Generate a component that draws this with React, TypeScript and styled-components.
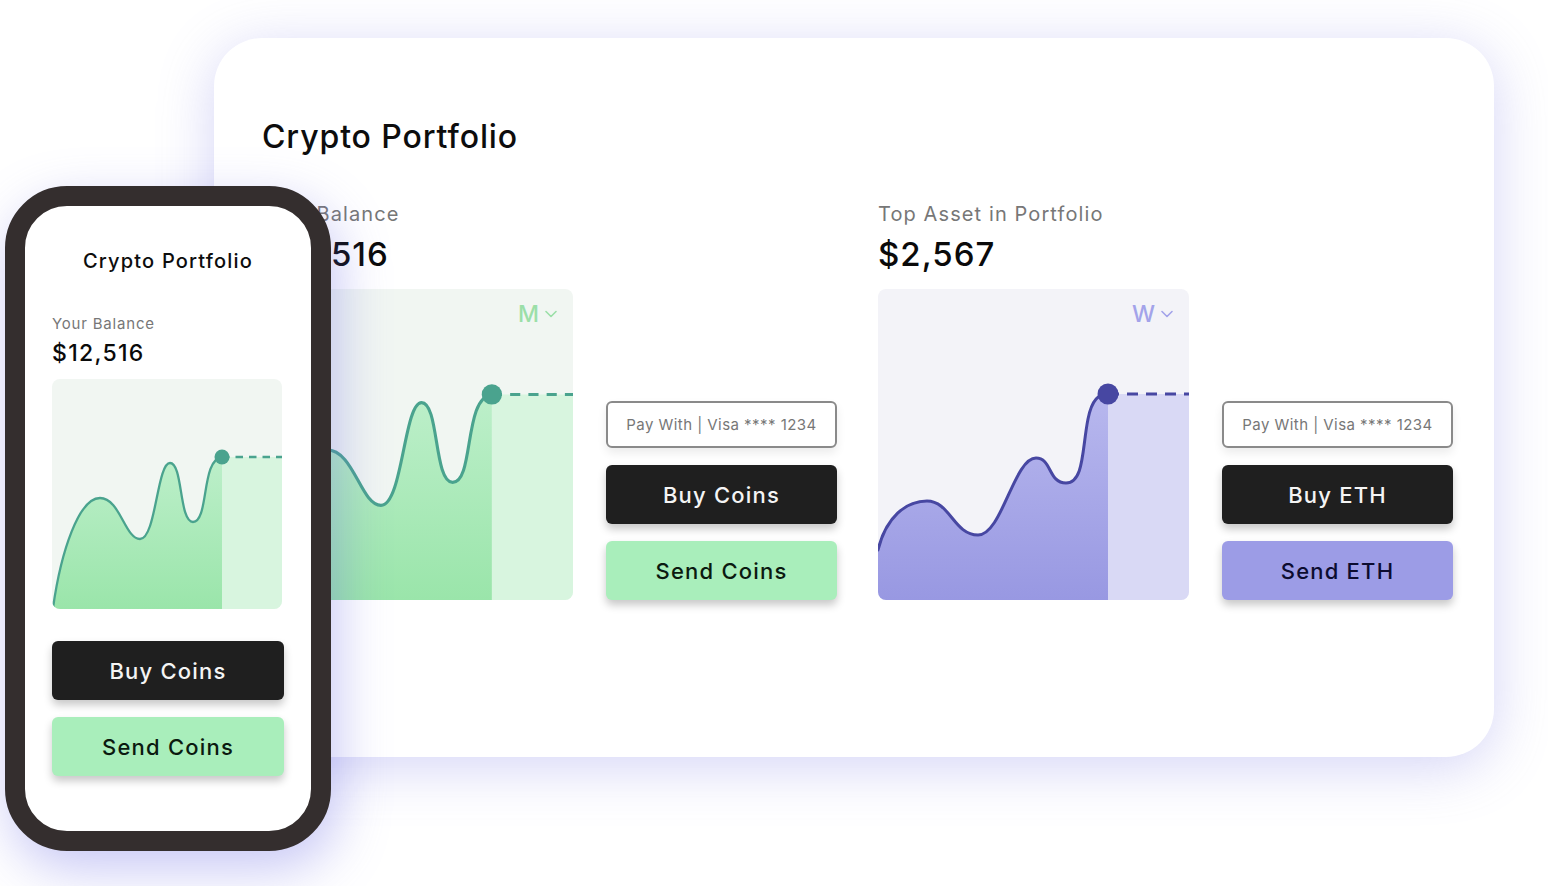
import React from "react";
import styled, { createGlobalStyle } from "styled-components";

const GlobalStyle = createGlobalStyle`
  html, body { margin: 0; padding: 0; background: #ffffff; }
  body { font-family: Inter, "Noto Sans", "Liberation Sans", sans-serif; color: #111; }
  * { box-sizing: border-box; }
`;

const Stage = styled.div`
  position: relative;
  width: 1548px;
  height: 886px;
  overflow: hidden;
  padding: 38px 0 0 214px;
`;

const Card = styled.div`
  width: 1280px;
  height: 719px;
  border-radius: 48px;
  background: #ffffff;
  box-shadow: 0 10px 56px rgba(112, 112, 226, 0.3);
  padding: 79px 41px 0 48px;
`;

const Title = styled.h1`
  margin: 0;
  font-size: 32px;
  line-height: 40px;
  font-weight: 500;
  letter-spacing: 0.9px;
  color: #0d0d0d;
`;

const SectionRow = styled.div`
  display: flex;
  gap: 41px;
  margin-top: 45px;
`;

const Section = styled.div`
  display: flex;
  align-items: flex-end;
  gap: 33px;
`;

const Info = styled.div<{ $w: number }>`
  display: flex;
  flex-direction: column;
  width: ${(p) => p.$w}px;
`;

const Label = styled.div<{ $small?: boolean }>`
  font-size: ${(p) => (p.$small ? 15 : 20)}px;
  line-height: ${(p) => (p.$small ? 18 : 24)}px;
  color: #777777;
  letter-spacing: ${(p) => (p.$small ? 0.8 : 1.1)}px;
  white-space: nowrap;
`;

const Value = styled.div<{ $small?: boolean }>`
  margin-top: ${(p) => (p.$small ? 6 : 8)}px;
  font-size: ${(p) => (p.$small ? 23 : 33)}px;
  line-height: ${(p) => (p.$small ? 28 : 40)}px;
  font-weight: 500;
  letter-spacing: ${(p) => (p.$small ? 1.3 : 1)}px;
  color: #0a0a0a;
  white-space: nowrap;
`;

const ChartBox = styled.div<{ $size: number; $bg: string; $gap: number }>`
  position: relative;
  margin-top: ${(p) => p.$gap}px;
  width: ${(p) => p.$size}px;
  height: ${(p) => p.$size}px;
  border-radius: 8px;
  overflow: hidden;
  background: ${(p) => p.$bg};
  svg.chart { display: block; width: 100%; height: 100%; }
`;

const Range = styled.div<{ $color: string }>`
  position: absolute;
  top: 12px;
  right: 16px;
  display: flex;
  align-items: center;
  gap: 6px;
  font-size: 23px;
  line-height: 26px;
  font-weight: 500;
  color: ${(p) => p.$color};
`;

const Actions = styled.div<{ $w: number; $top?: number }>`
  display: flex;
  flex-direction: column;
  gap: 17px;
  width: ${(p) => p.$w}px;
  margin-top: ${(p) => p.$top ?? 0}px;
`;

const PayWith = styled.div`
  height: 47px;
  border: 2px solid #8a8a8a;
  border-radius: 6px;
  background: #fff;
  display: flex;
  align-items: center;
  justify-content: center;
  font-size: 15px;
  color: #777;
  letter-spacing: 0.45px;
  box-shadow: 0 5px 10px rgba(0, 0, 0, 0.08);
  white-space: nowrap;
`;

const Button = styled.button<{ $bg: string; $fg: string }>`
  height: 59px;
  border: none;
  border-radius: 6px;
  background: ${(p) => p.$bg};
  color: ${(p) => p.$fg};
  font-family: inherit;
  font-size: 22px;
  font-weight: 500;
  letter-spacing: 1.2px;
  box-shadow: 0 5px 9px rgba(0, 0, 0, 0.22);
  cursor: pointer;
`;

const Phone = styled.div`
  position: absolute;
  left: 5px;
  top: 186px;
  width: 326px;
  height: 665px;
  border: 20px solid #342e2e;
  border-radius: 62px;
  background: #ffffff;
  box-shadow: 6px 18px 52px rgba(108, 108, 228, 0.38);
  padding: 43px 27px 0 27px;
  display: flex;
  flex-direction: column;
`;

const PhoneTitle = styled.div`
  font-size: 20px;
  line-height: 24px;
  font-weight: 500;
  letter-spacing: 1.2px;
  text-align: center;
  color: #0d0d0d;
  margin-bottom: 42px;
`;

type ChartSpec = {
  vb: number;
  path: string;
  px: number;
  py: number;
  line: string;
  top: string;
  bottom: string;
  rest: string;
  sw: number;
  r: number;
  dash: string;
};

const greenSpec: ChartSpec = {
  vb: 230,
  path:
    "M1,229 C9,172 27,119 48,119 C68,119 73,160 88,160 C104,160 105,84 118,84 C131,84 127,143 141,143 C157,143 149,80 170,78",
  px: 170,
  py: 78,
  line: "#4aa38e",
  top: "#bdefca",
  bottom: "#9ae5aa",
  rest: "#d8f5df",
  sw: 2.3,
  r: 7.5,
  dash: "7.5 6",
};

const purpleSpec: ChartSpec = {
  vb: 311,
  path:
    "M0,261 C8,228 28,212 49,212 C72,212 76,246 100,246 C124,246 136,169 158,169 C174,169 170,194 188,194 C206,194 204,160 210,130 C214,110 221,105 230,105",
  px: 230,
  py: 105,
  line: "#4747a2",
  top: "#b8b8ee",
  bottom: "#9898e2",
  rest: "#d9d9f5",
  sw: 3,
  r: 10.5,
  dash: "11 8",
};

function Chart({ spec, uid }: { spec: ChartSpec; uid: string }) {
  const gid = `fill-${uid}`;
  const { vb } = spec;
  return (
    <svg className="chart" viewBox={`0 0 ${vb} ${vb}`} preserveAspectRatio="none">
      <defs>
        <linearGradient id={gid} x1="0" y1="0" x2="0" y2="1">
          <stop offset="0" stopColor={spec.top} />
          <stop offset="1" stopColor={spec.bottom} />
        </linearGradient>
      </defs>
      <rect x={spec.px} y={spec.py} width={vb - spec.px} height={vb - spec.py} fill={spec.rest} />
      <path d={`${spec.path} L${spec.px},${vb} L0,${vb} Z`} fill={`url(#${gid})`} />
      <path d={spec.path} fill="none" stroke={spec.line} strokeWidth={spec.sw} strokeLinecap="round" />
      <line
        x1={spec.px}
        y1={spec.py}
        x2={vb}
        y2={spec.py}
        stroke={spec.line}
        strokeWidth={spec.sw}
        strokeDasharray={spec.dash}
      />
      <circle cx={spec.px} cy={spec.py} r={spec.r} fill={spec.line} />
    </svg>
  );
}

const Chevron = ({ color }: { color: string }) => (
  <svg width="12" height="8" viewBox="0 0 12 8">
    <polyline points="1,1.5 6,6.5 11,1.5" fill="none" stroke={color} strokeWidth="1.6" strokeLinecap="round" strokeLinejoin="round" />
  </svg>
);

export default function App() {
  return (
    <>
      <GlobalStyle />
      <Stage>
        <Card>
          <Title>Crypto Portfolio</Title>
          <SectionRow>
            <Section>
              <Info $w={311}>
                <Label>Your Balance</Label>
                <Value>$12,516</Value>
                <ChartBox $size={311} $bg="#f1f6f2" $gap={15}>
                  <Chart spec={greenSpec} uid="main-g" />
                  <Range $color="#9bdfa8">
                    M <Chevron color="#9bdfa8" />
                  </Range>
                </ChartBox>
              </Info>
              <Actions $w={231}>
                <PayWith>Pay With | Visa **** 1234</PayWith>
                <Button $bg="#1f1f1f" $fg="#f4f4f4">Buy Coins</Button>
                <Button $bg="#a9eebb" $fg="#0b1a10">Send Coins</Button>
              </Actions>
            </Section>
            <Section>
              <Info $w={311}>
                <Label>Top Asset in Portfolio</Label>
                <Value>$2,567</Value>
                <ChartBox $size={311} $bg="#f3f3f8" $gap={15}>
                  <Chart spec={purpleSpec} uid="main-p" />
                  <Range $color="#a3a3ea">
                    W <Chevron color="#a3a3ea" />
                  </Range>
                </ChartBox>
              </Info>
              <Actions $w={231}>
                <PayWith>Pay With | Visa **** 1234</PayWith>
                <Button $bg="#1f1f1f" $fg="#f4f4f4">Buy ETH</Button>
                <Button $bg="#9c9ce6" $fg="#0c0c30">Send ETH</Button>
              </Actions>
            </Section>
          </SectionRow>
        </Card>
        <Phone>
          <PhoneTitle>Crypto Portfolio</PhoneTitle>
          <Label $small>Your Balance</Label>
          <Value $small>$12,516</Value>
          <ChartBox $size={230} $bg="#f1f6f2" $gap={12}>
            <Chart spec={greenSpec} uid="phone-g" />
          </ChartBox>
          <Actions $w={232} $top={32}>
            <Button $bg="#1f1f1f" $fg="#f4f4f4">Buy Coins</Button>
            <Button $bg="#a9eebb" $fg="#0b1a10">Send Coins</Button>
          </Actions>
        </Phone>
      </Stage>
    </>
  );
}
